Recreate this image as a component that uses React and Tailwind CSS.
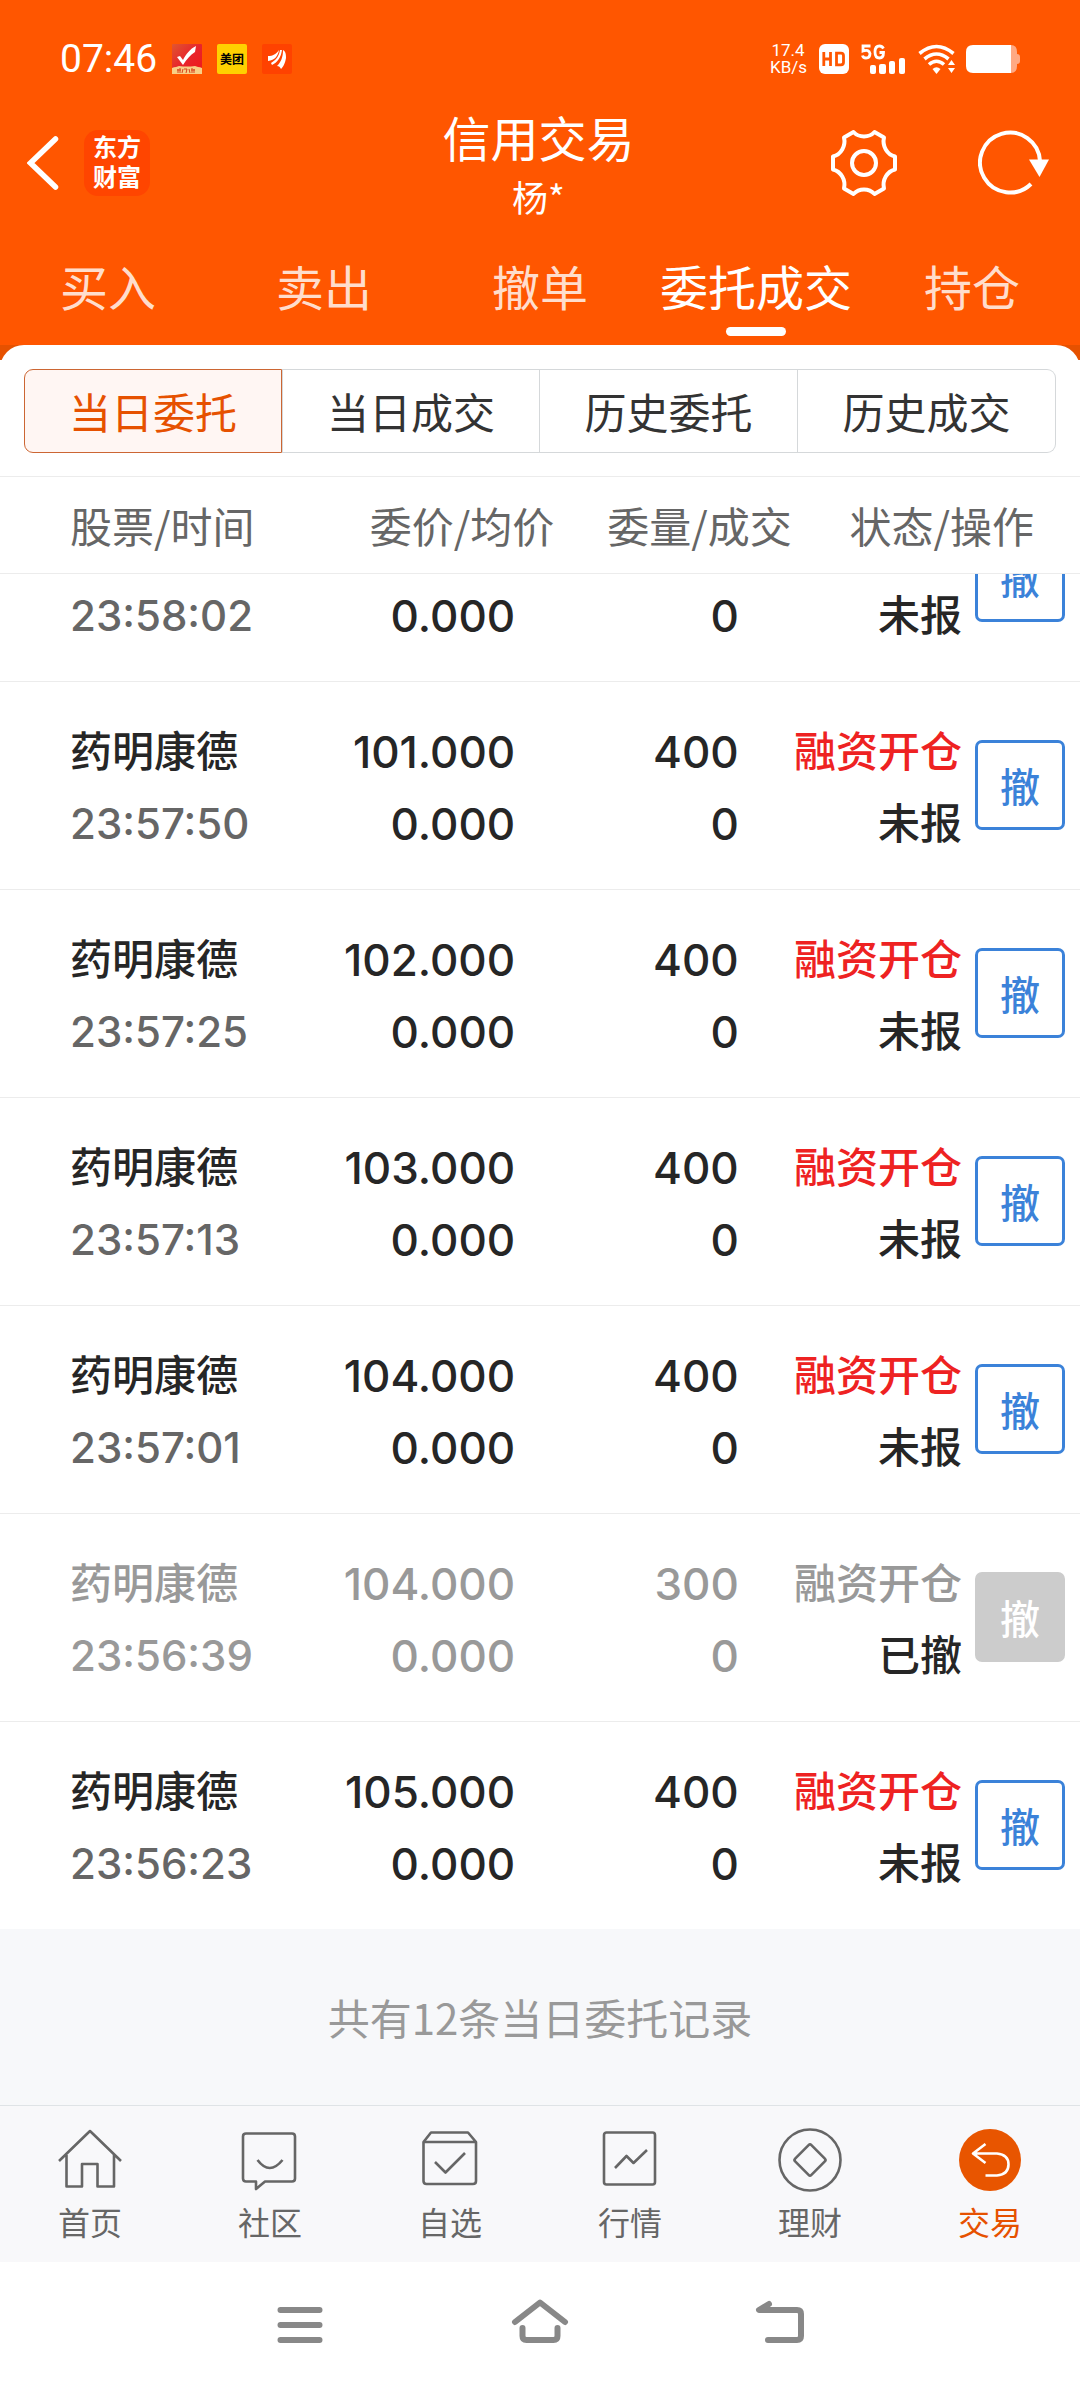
import React from 'react';

const TABS = ['买入', '卖出', '撤单', '委托成交', '持仓'];
const SEGMENTS = ['当日委托', '当日成交', '历史委托', '历史成交'];

const ORDERS = [
    { time: '23:58:02', status: '未报', partial: true },
    { name: '药明康德', time: '23:57:50', price: '101.000', amount: '400', status: '未报' },
    { name: '药明康德', time: '23:57:25', price: '102.000', amount: '400', status: '未报' },
    { name: '药明康德', time: '23:57:13', price: '103.000', amount: '400', status: '未报' },
    { name: '药明康德', time: '23:57:01', price: '104.000', amount: '400', status: '未报' },
    { name: '药明康德', time: '23:56:39', price: '104.000', amount: '300', status: '已撤', cancelled: true },
    { name: '药明康德', time: '23:56:23', price: '105.000', amount: '400', status: '未报' },
];

const StatusBar = () => (
    <div className="flex items-center justify-between h-[84px] pt-[34px] pl-[60px] pr-[60px]">
        <div className="flex items-center">
            <span className="font-[Roboto,sans-serif] text-[39px] leading-[50px] mr-[15px]">07:46</span>
            <div className="flex gap-[15px]">
                <svg className="w-[30px] h-[30px]" viewBox="0 0 30 30">
                    <defs>
                        <linearGradient id="stock" x1="0" y1="0" x2="1" y2="1">
                            <stop offset="0" stopColor="#e0562f" />
                            <stop offset="0.5" stopColor="#e8242c" />
                            <stop offset="1" stopColor="#f01818" />
                        </linearGradient>
                    </defs>
                    <rect width="30" height="30" rx="1" fill="url(#stock)" />
                    <path d="M5 13l3-1 3 4c3-6 7-11 13-14l-1 6c-5 3-8 7-12 13z" fill="#fff" />
                    <path d="M0 24q2-1 4-1l3-1q8 1 16 0l3 1q2 0 4 1v6H0z" fill="#f8cf86" />
                    <path d="M6 25v4M5 26h4M8 24v5M11 25l-1 4M12 25h3l-1 4M17 25l1 4M20 24v5M19 26h4M22 25v4" stroke="#d8401c" strokeWidth="1" fill="none" />
                </svg>
                <span className="flex items-center justify-center w-[30px] h-[30px] rounded-[2px] bg-[#ffd100] text-black text-[12px] leading-[12px] font-bold">美团</span>
                <svg className="w-[30px] h-[30px]" viewBox="0 0 30 30">
                    <rect width="30" height="30" rx="2" fill="#ff4200" />
                    <path d="M6 12c5 0 8-2 11-6-1 6-4 10-11 11z" fill="#fff" />
                    <path d="M18 6l2 0c-1 7-4 12-10 15l-1-2c5-3 8-7 9-13z" fill="#fff" />
                    <path d="M21 6c2 1 3 3 3 8-1 6-3 9-5 11-1-2-2-3-4-3 4-4 6-9 6-16z" fill="#fff" />
                </svg>
            </div>
        </div>
        <div className="flex items-center">
            <div className="w-[36px] text-center font-[Roboto,sans-serif] text-[17px] leading-[17px]">
                <div>17.4</div>
                <div>KB/s</div>
            </div>
            <svg className="w-[30px] h-[30px] ml-[13px]" viewBox="0 0 30 30">
                <rect width="30" height="30" rx="6" fill="#fff" />
                <path d="M4.800 8v14M11.500 8v14M4.800 15h7M17.500 9.200h4.500q2.500 0 2.500 2.500v6.600q0 2.500-2.500 2.500H17.500z" stroke="#ff5600" strokeWidth="2.800" fill="none" />
            </svg>
            <svg className="w-[45px] h-[30px] ml-3" viewBox="0 0 45 30">
                <path d="M9.500 2H2v5q6-2 7 2.500Q9 14 5 14 2 14 1.500 11.500M22.500 4.500Q21 2 18.500 2 14 2 14 8t4.500 6q4 0 4-5.500H18.500" stroke="#fff" strokeWidth="2.800" fill="none" />
                <rect x="9" y="21" width="6" height="9" rx="2" fill="#fff" />
                <rect x="18" y="20" width="7" height="10" rx="2" fill="#fff" />
                <rect x="28" y="17" width="6" height="13" rx="2" fill="#fff" />
                <rect x="38" y="14" width="6" height="16" rx="2" fill="#fff" />
            </svg>
            <svg className="w-[38px] h-[30px] ml-3" viewBox="0 0 38 30">
                <g fill="none" stroke="#fff" strokeWidth="3.600">
                    <path d="M1.500 9.500Q18.500-4.500 35.500 9.500" />
                    <path d="M6.500 15Q18.500 5 30.500 15" />
                    <path d="M11 20.500Q18.500 14 26 20.500" />
                </g>
                <path d="M14.500 25Q18.500 21.500 22.500 25L18.500 30z" fill="#fff" />
                <path d="M30 21l3.500-5 3.500 5zM30 24l3.500 5 3.500-5z" fill="#fff" />
            </svg>
            <svg className="w-[54px] h-[28px] ml-[10px]" viewBox="0 0 54 28">
                <path d="M45 0q6 0 6 7v2q3 0 3 3v4q0 3-3 3v2q0 7-6 7z" fill="#ffa983" />
                <path d="M7 0h38v28H7q-7 0-7-7V7q0-7 7-7z" fill="#fff" />
            </svg>
        </div>
    </div>
);

const TitleBar = () => (
    <div className="grid grid-cols-[1fr_auto_1fr] items-center h-[158px] pl-[27px] pr-[30px]">
        <div className="flex items-center gap-[25px]">
            <button aria-label="返回">
                <svg className="block w-[32px] h-[56px]" viewBox="0 0 32 56" fill="none" stroke="#fff" strokeWidth="5.500" strokeLinecap="round">
                    <path d="M28.500 4L3.500 28l25 24" />
                </svg>
            </button>
            <div className="flex flex-col items-center justify-center w-[66px] h-[66px] pb-1 rounded-[14px] bg-[#ff4500] text-[24px] leading-[30px] font-bold">
                <span>东方</span>
                <span>财富</span>
            </div>
        </div>
        <div className="text-center">
            <h1 className="text-[48px] leading-[66px]">信用交易</h1>
            <p className="text-[36px] leading-[54px]">杨*</p>
        </div>
        <div className="flex items-center justify-end gap-20">
            <button aria-label="设置">
                <svg className="block w-[68px] h-[68px]" viewBox="-34 -34 68 68" fill="none" stroke="#fff" strokeWidth="4" strokeLinejoin="round">
                    <path d="M-10.500-31C-5-25 5-25 10.500-31L20-25.500C18-17 23-8.500 31-6.500V6.500C23 8.500 18 17 20 25.500L10.500 31C5 25-5 25-10.500 31L-20 25.500C-18 17-23 8.500-31 6.500V-6.500C-23-8.500-18-17-20-25.500z" />
                    <circle r="12" />
                </svg>
            </button>
            <button aria-label="刷新">
                <svg className="block w-[72px] h-[66px]" viewBox="0 0 72 66" fill="none">
                    <path d="M53 54A30 30 0 1 1 62 31" stroke="#fff" strokeWidth="4" />
                    <path d="M51 29.500h20L61.500 47z" fill="#fff" />
                </svg>
            </button>
        </div>
    </div>
);

const Tabs = () => (
    <nav className="grid grid-cols-5 h-[103px] pt-[11px]">
        {TABS.map((tab) => (
            <button key={tab} className={`flex flex-col items-center text-[48px] leading-[64px] ${tab === '委托成交' ? 'text-white' : 'text-[#ffddcc]'}`}>
                {tab}
                {tab === '委托成交' && <span className="w-[60px] h-[9px] mt-[10px] rounded-full bg-white"></span>}
            </button>
        ))}
    </nav>
);

const Segments = () => (
    <div className="grid grid-cols-4 mx-6 text-[42px] leading-[82px] text-[#333]">
        {SEGMENTS.map((item, i) => (
            <button
                key={item}
                className={`border text-center ${i === 0 ? 'border-[#cc6633] bg-[#fff6f3] text-[#e65100] rounded-l-[9px]' : 'border-[#d5d8da]'} ${i > 1 ? 'border-l-0' : ''} ${i === 3 ? 'rounded-r-[9px]' : ''}`}
            >
                {item}
            </button>
        ))}
    </div>
);

const OrderRow = ({ order }) => {
    const { name, time, price, amount, status, partial, cancelled } = order;
    // the top row is scrolled half under the table head
    const cell = `flex flex-col overflow-hidden font-medium leading-[72px] whitespace-nowrap ${partial ? 'h-[107px] justify-end pb-[29px]' : 'h-[207px] pt-[34px]'}`;
    const main = cancelled ? 'text-[#999]' : 'text-[#262626]';
    const label = 'text-[42px] leading-[66px] mb-[6px]';

    return (
        <tr className="border-b border-[#ececec] last:border-b-0">
            <td>
                <div className={`${cell} pl-[70px]`}>
                    {name && <span className={`${label} ${main}`}>{name}</span>}
                    <span className={`font-[Inter,sans-serif] text-[42px] ${cancelled ? 'text-[#999]' : 'text-[#666]'}`}>{time}</span>
                </div>
            </td>
            <td>
                <div className={`${cell} ${main} pr-[41px] text-right font-[Inter,sans-serif] text-[44px]`}>
                    {price && <span>{price}</span>}
                    <span>0.000</span>
                </div>
            </td>
            <td>
                <div className={`${cell} ${main} pr-[55px] text-right font-[Inter,sans-serif] text-[44px]`}>
                    {amount && <span>{amount}</span>}
                    <span>0</span>
                </div>
            </td>
            <td>
                <div className="flex justify-end gap-[13px] pr-[15px]">
                    <div className={`${cell} text-right`}>
                        {name && <span className={`${label} ${cancelled ? 'text-[#999]' : 'text-[#ee2222]'}`}>融资开仓</span>}
                        <span className={`${label} text-[#262626]`}>{status}</span>
                    </div>
                    <div className={`flex flex-col justify-end shrink-0 overflow-hidden pb-[59px] ${partial ? 'h-[107px]' : 'h-[207px]'}`}>
                        <button
                            disabled={cancelled}
                            className={`shrink-0 w-[90px] h-[90px] rounded-[7px] border-3 text-[40px] leading-[82px] font-medium ${cancelled ? 'border-[#ccc] bg-[#ccc] text-white' : 'border-[#3b82d9] text-[#3b82d9]'}`}
                        >
                            撤
                        </button>
                    </div>
                </div>
            </td>
        </tr>
    );
};

const OrderTable = () => (
    <table className="w-full table-fixed border-collapse">
        <thead>
            <tr className="h-[97px] border-y border-[#ececec] text-[42px] leading-[60px] text-[#666] whitespace-nowrap">
                <th className="w-[30%] pl-[70px] text-left font-normal">股票/时间</th>
                <th className="w-[21.5%] pr-[2px] text-right font-normal">委价/均价</th>
                <th className="w-[22%] pr-[2px] text-right font-normal">委量/成交</th>
                <th className="w-[26.5%] pr-[46px] text-right font-normal">状态/操作</th>
            </tr>
        </thead>
        <tbody>
            {ORDERS.map((order) => (
                <OrderRow key={order.time} order={order} />
            ))}
        </tbody>
    </table>
);

const NAV_ITEMS = [
    {
        label: '首页',
        icon: <path d="M1 33L32 3l31 30M8.500 27v31.500H24V36h15.500v22.500H56V27" />,
    },
    {
        label: '社区',
        icon: (
            <>
                <path d="M8 5.500h46q3 0 3 3v42q0 3-3 3H27l-9 7.500v-7.500H8q-3 0-3-3v-42q0-3 3-3z" />
                <path d="M19.500 32q12 16 25 0" />
            </>
        ),
    },
    {
        label: '自选',
        icon: (
            <>
                <path d="M5.500 14L13 4.500h37L58 14v39q0 3-3 3H8.500q-3 0-3-3zM5.500 14H58" />
                <path d="M17 34l10.500 10.500L47 25" />
            </>
        ),
    },
    {
        label: '行情',
        icon: (
            <>
                <rect x="6" y="4.500" width="51" height="52" rx="2.500" />
                <path d="M17 40l11.500-12 7 7L49 22" />
            </>
        ),
    },
    {
        label: '理财',
        icon: (
            <>
                <circle cx="32" cy="32" r="30.500" />
                <rect x="20.500" y="20.500" width="23" height="23" rx="2" transform="rotate(45 32 32)" />
            </>
        ),
    },
    {
        label: '交易',
        active: true,
        icon: (
            <>
                <circle cx="32" cy="32" r="31" fill="#e85500" stroke="none" />
                <path d="M27.500 16L15 25.500l12.500 9.500M15.500 25.500H39q11.500 1 11.500 11T39 47.500H27.500" stroke="#fff" />
            </>
        ),
    },
];

const BottomNav = () => (
    <nav className="grid grid-cols-6 h-[157px] pt-[22px] border-t border-[#dfe3e6] bg-[#f8f8fa]">
        {NAV_ITEMS.map(({ label, icon, active }) => (
            <a key={label} href="#" className={`flex flex-col items-center text-[32px] leading-[40px] ${active ? 'text-[#e65100]' : 'text-[#666]'}`}>
                <svg className="w-[64px] h-[64px] mb-[9px]" viewBox="0 0 64 64" fill="none" stroke="currentColor" strokeWidth="2.600" strokeLinejoin="round">
                    {icon}
                </svg>
                {label}
            </a>
        ))}
    </nav>
);

const SystemNav = () => (
    <div className="grid grid-cols-3 w-2/3 mx-auto h-[126px] pt-[36px] justify-items-center items-start">
        <button aria-label="菜单">
            <svg className="block w-[60px] h-[48px]" viewBox="0 0 60 48" fill="none" stroke="#888" strokeWidth="6" strokeLinecap="round">
                <path d="M10.500 12h39M10.500 27h39M10.500 42h39" />
            </svg>
        </button>
        <button aria-label="主屏幕">
            <svg className="block w-[60px] h-[48px]" viewBox="0 0 60 48" fill="none" stroke="#888" strokeWidth="6" strokeLinecap="round" strokeLinejoin="round">
                <path d="M5 24L30 4.500 55 24M12.500 30v8q0 4 4 4h27q4 0 4-4v-8" />
            </svg>
        </button>
        <button aria-label="后退">
            <svg className="block w-[60px] h-[48px]" viewBox="0 0 60 48" fill="none" stroke="#888" strokeWidth="6" strokeLinecap="round" strokeLinejoin="round">
                <path d="M19 6L9 12h38q4 0 4 4v22q0 4-4 4H18" />
            </svg>
        </button>
    </div>
);

const App = () => {
    return (
        <div className="w-full bg-white font-['Noto_Sans_CJK_SC',sans-serif]">
            <header className="bg-[#ff5600] text-white">
                <StatusBar />
                <TitleBar />
                <Tabs />
            </header>
            <main className="bg-[linear-gradient(#e65100_15px,#fff_15px)]">
                <div className="rounded-t-[24px] bg-white pt-6">
                    <Segments />
                    <div className="mt-[23px]">
                        <OrderTable />
                    </div>
                </div>
                <p className="h-[176px] bg-[#f7f8fa] text-center text-[42px] leading-[176px] text-[#999]">共有12条当日委托记录</p>
            </main>
            <BottomNav />
            <SystemNav />
        </div>
    );
};

export default App;
